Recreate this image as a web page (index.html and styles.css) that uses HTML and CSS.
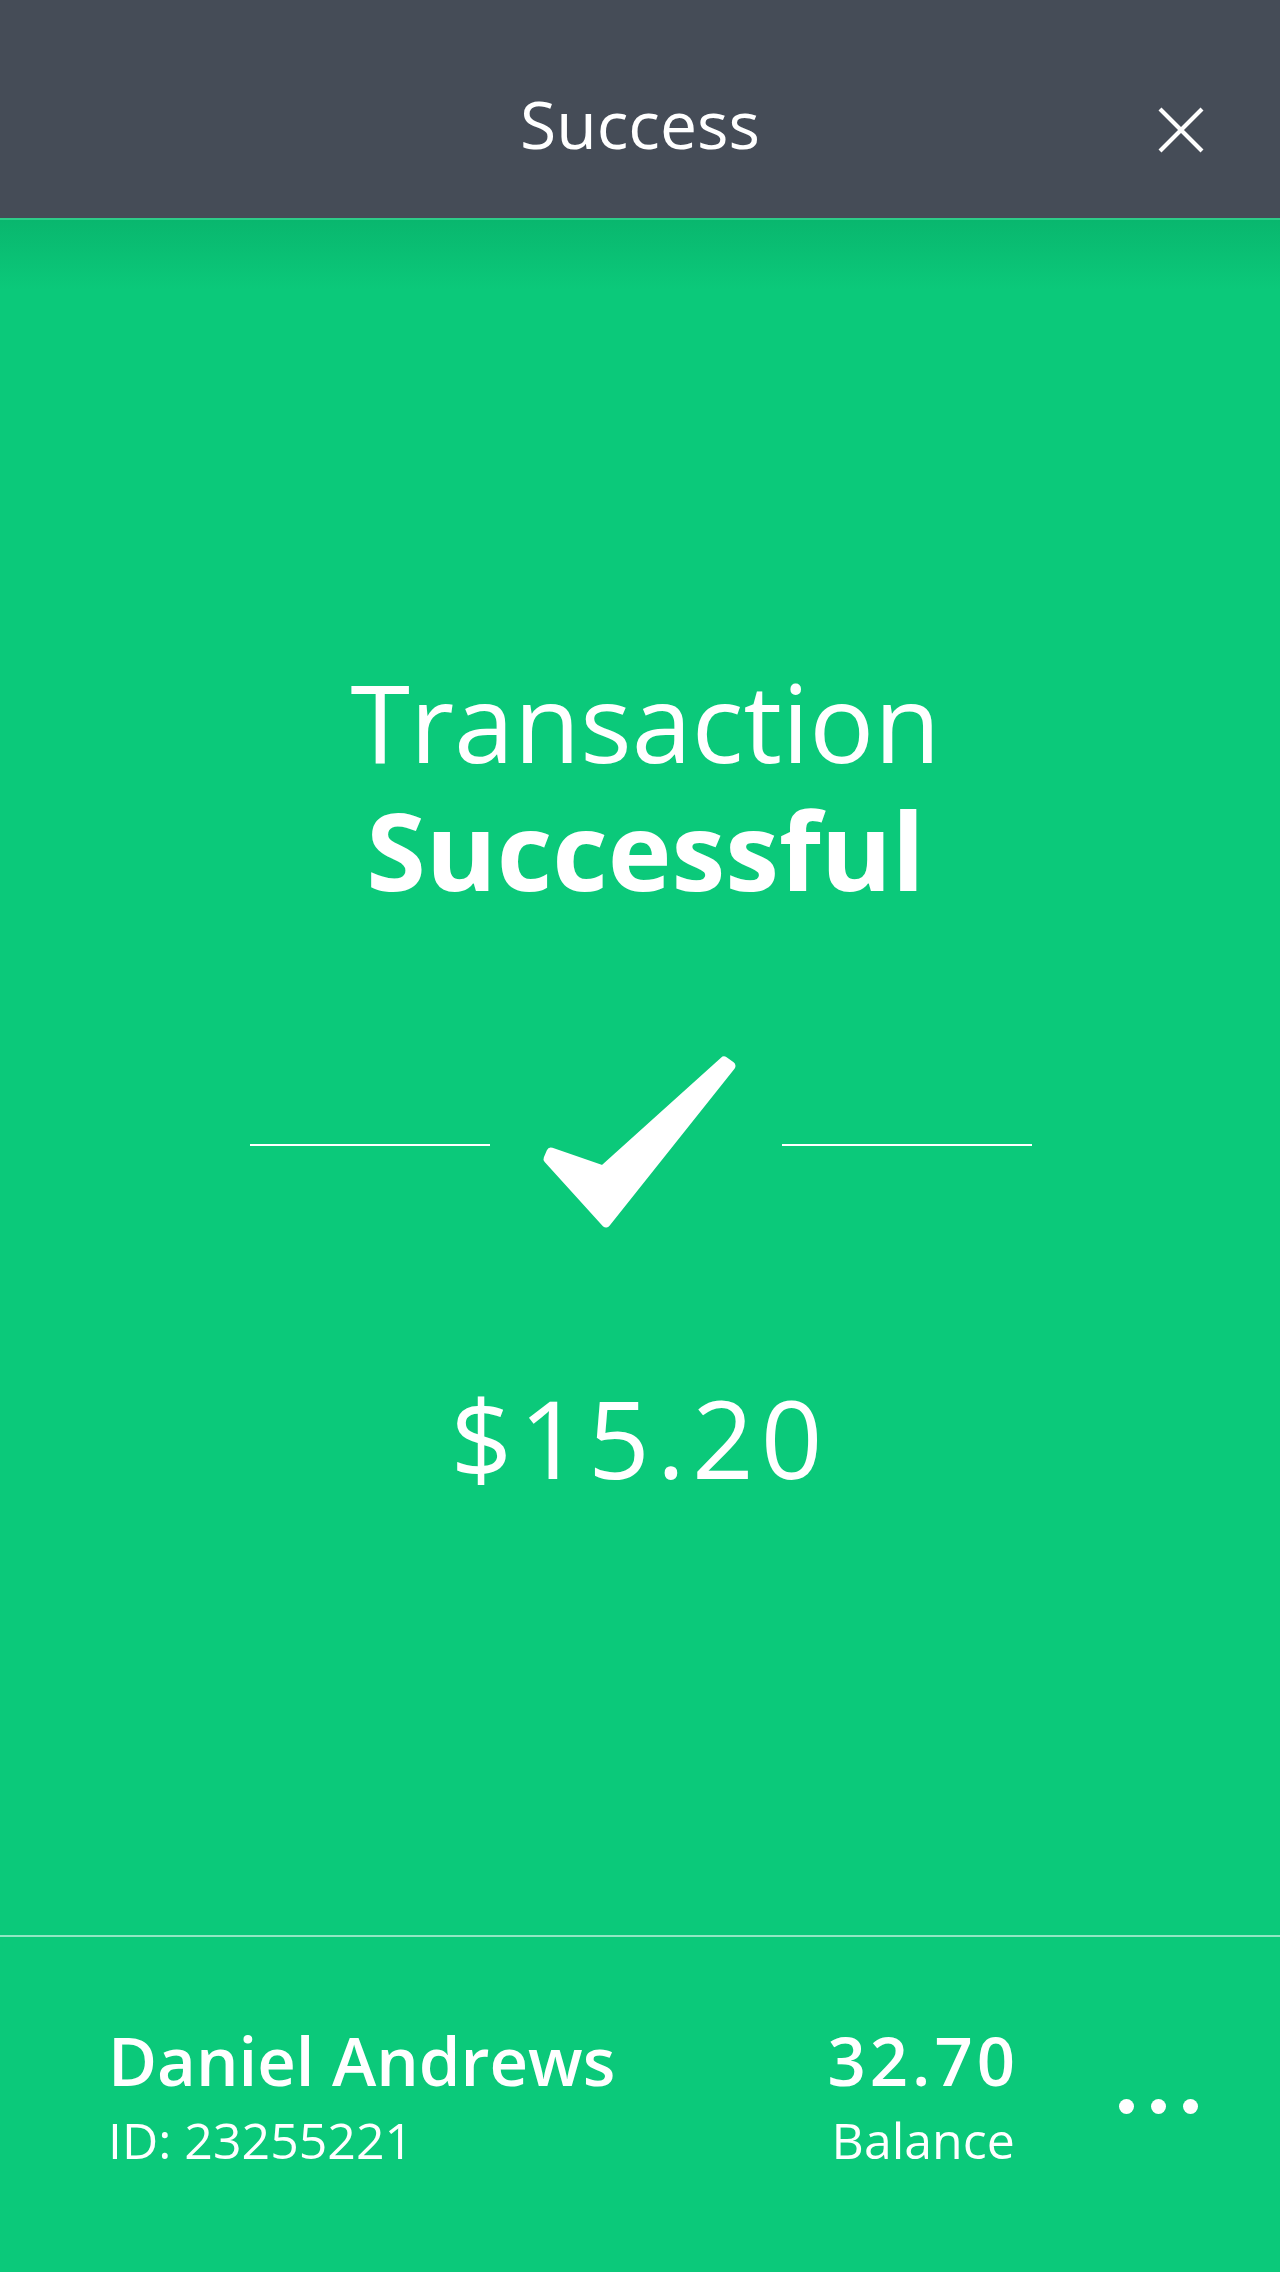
FILE: index.html
```html
<!DOCTYPE html>
<html lang="en">
<head>
<meta charset="utf-8">
<title>Success</title>
<link rel="stylesheet" href="styles.css">
</head>
<body>
<div class="screen">
  <header class="topbar">
    <span class="spacer"></span>
    <h1 class="title">Success</h1>
    <button class="close" aria-label="Close">
      <svg width="46" height="46" viewBox="0 0 46 46"><path d="M2 2 L44 44 M44 2 L2 44" stroke="#fff" stroke-width="4.2" fill="none"/></svg>
    </button>
  </header>
  <main class="hero">
    <h2 class="headline"><span class="light">Transaction</span><span class="strong">Successful</span></h2>
    <div class="check-row">
      <span class="rule rule-left"></span>
      <svg class="check" width="197" height="176" viewBox="21 24 197 176">
        <path d="M31 122 L83 140 L204 31 L211 36 L86 193 L28 129 Z" fill="#fff" stroke="#fff" stroke-width="9" stroke-linejoin="round"/>
      </svg>
      <span class="rule rule-right"></span>
    </div>
    <p class="amount">$15.20</p>
  </main>
  <footer class="account">
    <div class="who">
      <div class="name">Daniel Andrews</div>
      <div class="id">ID: 23255221</div>
    </div>
    <div class="balance">
      <div class="value">32.70</div>
      <div class="label">Balance</div>
    </div>
    <button class="more" aria-label="More"><span class="dot"></span><span class="dot"></span><span class="dot"></span></button>
  </footer>
</div>
</body>
</html>
```
FILE: styles.css
```css
* { box-sizing: border-box; }
html, body { margin: 0; padding: 0; }
body {
  font-family: "Open Sans", "Noto Sans", sans-serif;
  color: #fff;
  background: #0bc97a;
}
.screen {
  display: flex;
  flex-direction: column;
  min-height: 2272px;
}
.topbar {
  height: 218px;
  background: #454c57;
  display: grid;
  grid-template-columns: 1fr auto 1fr;
  align-items: start;
  padding-top: 90px;
}
.title {
  margin: 0;
  font-size: 66px;
  font-weight: 400;
  line-height: 66px;
}
.close {
  justify-self: end;
  margin: 17px 76px 0 0;
  padding: 0;
  border: 0;
  background: none;
  width: 46px;
  height: 46px;
  display: block;
}
.close svg { display: block; }
.hero {
  flex: 1;
  border-top: 2px solid #2ccd89;
  background: linear-gradient(to bottom, #09b76e 0, #0bc97a 70px);
  display: flex;
  flex-direction: column;
  align-items: center;
  padding-top: 438px;
}
.headline {
  margin: 0;
  padding-left: 11px;
  display: flex;
  flex-direction: column;
  align-items: center;
  font-size: 108px;
  line-height: 128px;
}
.light { font-weight: 400; }
.strong { font-weight: 700; }
.check-row {
  margin-top: 140px;
  display: flex;
  align-items: flex-start;
  width: 782px;
  margin-left: 1px;
}
.rule {
  height: 2px;
  background: #fff;
  margin-top: 90px;
}
.rule-left { width: 240px; margin-right: 51px; }
.rule-right { width: 250px; margin-left: 44px; }
.check { display: block; flex: none; }
.amount {
  margin: 144px 0 0;
  font-size: 108px;
  font-weight: 400;
  line-height: 128px;
  letter-spacing: 7px;
}
.account {
  height: 337px;
  border-top: 2px solid rgba(255, 255, 255, 0.55);
  display: flex;
  align-items: center;
  padding: 0 82px 9px 108px;
}
.who { flex: 1; }
.name {
  font-size: 67px;
  font-weight: 600;
  line-height: 80px;
}
.id, .label {
  font-size: 50px;
  font-weight: 400;
  line-height: 80px;
}
.balance {
  display: flex;
  flex-direction: column;
  align-items: center;
  margin-right: 100px;
}
.value {
  font-size: 67px;
  font-weight: 600;
  line-height: 80px;
  letter-spacing: 4px;
}
.more {
  display: flex;
  gap: 17px;
  padding: 0;
  border: 0;
  background: none;
  margin-top: 13px;
}
.dot {
  width: 15px;
  height: 15px;
  border-radius: 50%;
  background: #fff;
}
```
